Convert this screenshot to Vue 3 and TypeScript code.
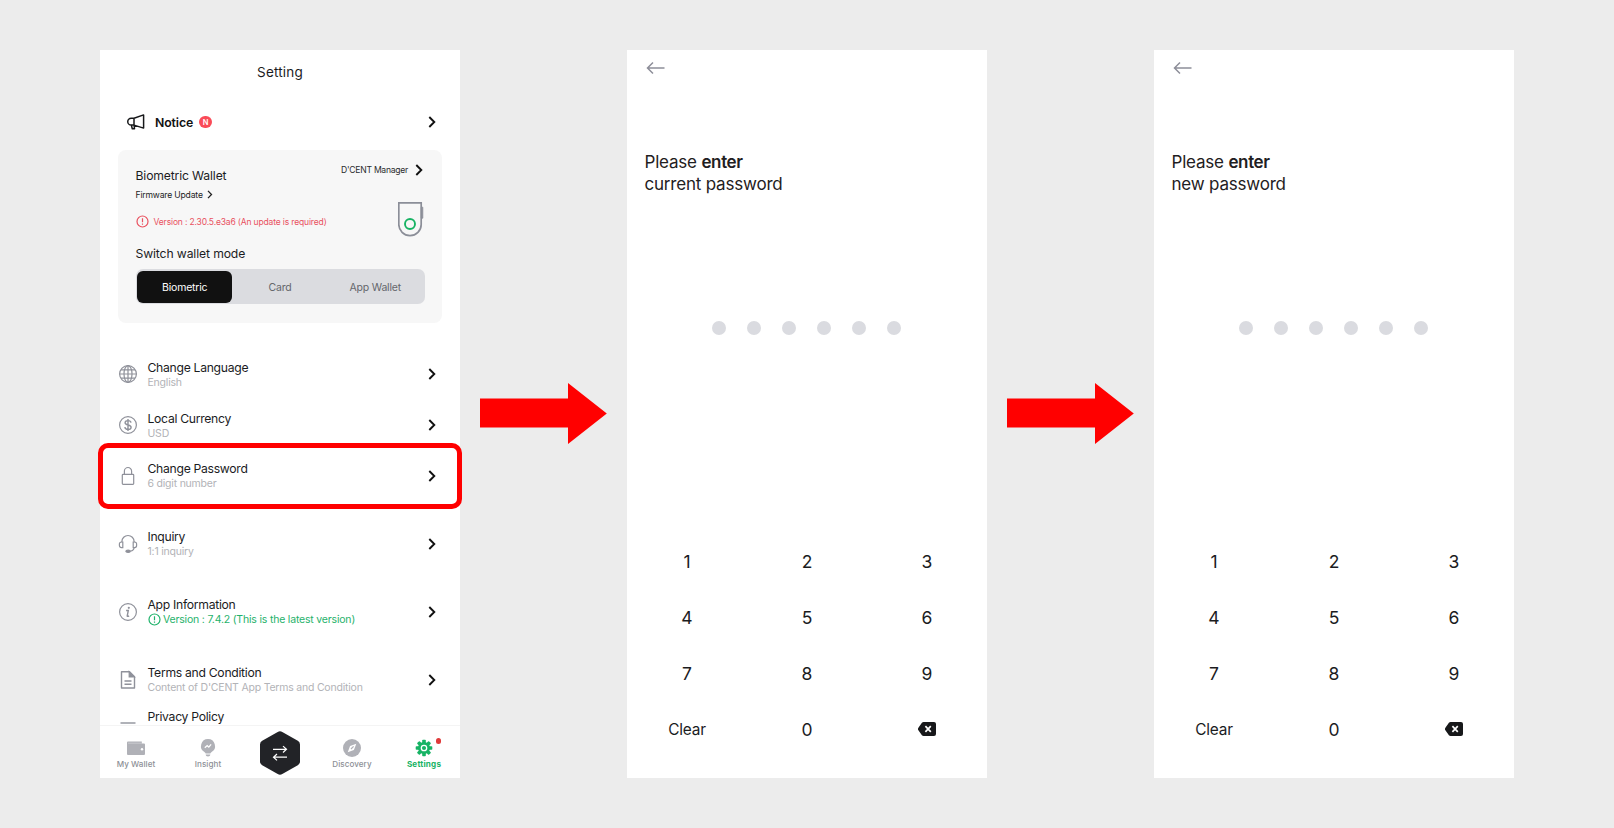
<script setup lang="ts">
interface Row {
  id: string
  icon: string
  title: string
  sub: string
  gap?: boolean
  ok?: boolean
  highlight?: boolean
}

const rows: Row[] = [
  { id: 'language', icon: 'globe', title: 'Change Language', sub: 'English' },
  { id: 'currency', icon: 'dollar', title: 'Local Currency', sub: 'USD' },
  { id: 'password', icon: 'lock', title: 'Change Password', sub: '6 digit number', highlight: true },
  { id: 'inquiry', icon: 'headset', title: 'Inquiry', sub: '1:1 inquiry', gap: true },
  { id: 'app', icon: 'info', title: 'App Information', sub: 'Version : 7.4.2 (This is the latest version)', gap: true, ok: true },
  { id: 'terms', icon: 'doc', title: 'Terms and Condition', sub: "Content of D'CENT App Terms and Condition", gap: true },
]

const screens: string[] = ['current password', 'new password']
const keys: string[] = ['1', '2', '3', '4', '5', '6', '7', '8', '9', 'Clear', '0', 'back']
</script>

<template>
  <main class="board">
    <section class="phone">
      <div class="scroll">
        <header class="heading">Setting</header>

        <div class="notice">
          <svg class="horn" viewBox="0 0 18 16">
            <path d="M7 4.2 16.6.9v13.2L7 11.1H4.2a3.4 3.4 0 0 1 0-6.9zM7 4.2v6.9M4.4 11.2l.9 3.6h2.2l-.4-3.6" />
          </svg>
          <b class="notice-label">Notice</b>
          <span class="badge">N</span>
          <svg class="chev" viewBox="0 0 8 12"><path d="m1.3 1 5 5-5 5" /></svg>
        </div>

        <div class="card">
          <div class="card-top">
            <div class="card-left">
              <div class="card-title">Biometric Wallet</div>
              <div class="firmware">
                <span>Firmware Update</span>
                <svg class="chev-s" viewBox="0 0 6 9"><path d="m1 .9 3.5 3.6L1 8.1" /></svg>
              </div>
              <div class="warn">
                <svg class="alert" viewBox="0 0 13 13"><circle cx="6.5" cy="6.5" r="5.5" /><path d="M6.5 3.3v3.9M6.5 8.5v1.2" /></svg>
                <span>Version : 2.30.5.e3a6 (An update is required)</span>
              </div>
            </div>
            <div class="card-right">
              <div class="manager">
                <span>D'CENT Manager</span>
                <svg class="chev" viewBox="0 0 8 12"><path d="m1.3 1 5 5-5 5" /></svg>
              </div>
              <svg class="device" viewBox="0 0 26 35">
                <path class="dev-btn" d="M23.2 5.2h1.6v11h-1.6z" />
                <path class="dev-body" d="M.8.8h22.4v21.6a11.2 11.2 0 0 1-22.4 0z" />
                <circle cx="12" cy="22" r="5" />
              </svg>
            </div>
          </div>
          <div class="mode-title">Switch wallet mode</div>
          <div class="seg">
            <span class="seg-item on">Biometric</span>
            <span class="seg-item">Card</span>
            <span class="seg-item">App Wallet</span>
          </div>
        </div>

        <div class="list">
          <div v-for="r in rows" :key="r.id" class="row" :class="{ gap: r.gap }">
            <svg class="ico" viewBox="0 0 20 20">
              <g v-if="r.icon === 'globe'">
                <circle cx="10" cy="10" r="8.4" /><ellipse cx="10" cy="10" rx="4" ry="8.4" />
                <path d="M10 1.6v16.8M1.6 10h16.8M2.9 5.9h14.2M2.9 14.1h14.2" />
              </g>
              <g v-else-if="r.icon === 'dollar'">
                <circle cx="10" cy="10" r="8.4" />
                <path class="mid" d="M13 7.6c-.2-1.3-1.3-2-3-2s-2.9.8-2.9 2.1c0 3 6 1.5 6 4.5 0 1.4-1.3 2.2-3.1 2.2s-3-.8-3.2-2.2M10 4v12" />
              </g>
              <g v-else-if="r.icon === 'lock'">
                <rect x="4.3" y="8.3" width="11.4" height="10" rx=".8" />
                <path d="M6.4 8.2V5.1a3.6 3.6 0 0 1 7.2 0v3.1" />
              </g>
              <g v-else-if="r.icon === 'headset'">
                <path d="M3.9 8.2V7.6a6.1 6.1 0 0 1 12.2 0v.6M16.1 13.2c0 2-1.500 3.600-3.800 3.900" />
                <path d="M4.800 8v5.600H3.400a2 2 0 0 1-2-2v-1.400A2 2 0 0 1 3.400 8zM15.200 8v5.600h1.400a2 2 0 0 0 2-2v-1.400a2 2 0 0 0-2-2.200z" />
                <ellipse class="fill" cx="10.100" cy="17.200" rx="2.200" ry="1.200" />
              </g>
              <g v-else-if="r.icon === 'info'">
                <circle cx="10" cy="10" r="8.4" />
                <path class="mid" d="M8.100 8.500h2.200L9.200 14c.4.5 1 .3 1.900-.2" /><circle class="dot" cx="10.800" cy="5.800" r="1.100" />
              </g>
              <g v-else>
                <path class="mid" d="M3.500 1.700h8l5 5v11.300h-13z" stroke-linejoin="round" />
                <path class="fill" d="M11.200 1.700v5.200h5.200z" /><path class="mid" d="M6.500 11h7M6.500 14.300h7" />
              </g>
            </svg>
            <div class="texts">
              <div class="t">{{ r.title }}</div>
              <div class="s" :class="[r.id, { ok: r.ok }]">
                <svg v-if="r.ok" class="alert" viewBox="0 0 13 13"><circle cx="6.5" cy="6.5" r="5.5" /><path d="M6.5 3.3v3.9M6.5 8.5v1.2" /></svg>
                <span>{{ r.sub }}</span>
              </div>
            </div>
            <svg class="chev" viewBox="0 0 8 12"><path d="m1.3 1 5 5-5 5" /></svg>
            <div v-if="r.highlight" class="frame"></div>
          </div>
          <div class="row cut">
            <svg class="ico" viewBox="0 0 20 20"><path class="mid" d="M2.5 2h15" /></svg>
            <div class="texts"><div class="t">Privacy Policy</div></div>
          </div>
        </div>
      </div>

      <nav class="tabs">
        <div class="tab">
          <svg class="tab-ico" viewBox="0 0 20 20">
            <path d="M2.3 3.500h13.500v2H18a1 1 0 0 1 1 1v9.500a1 1 0 0 1-1 1H2a1 1 0 0 1-1-1V4.800c0-.8.5-1.300 1.300-1.300z" />
            <path class="light" d="M2 5.200h13.800" /><circle class="white" cx="16" cy="11.200" r="1.200" />
          </svg>
          <span>My Wallet</span>
        </div>
        <div class="tab">
          <svg class="tab-ico" viewBox="0 0 20 20">
            <path d="M10 1a7 7 0 0 1 3.600 13c-.8.5-1 1.200-1.300 1.600H7.700c-.3-.4-.5-1.100-1.300-1.600A7 7 0 0 1 10 1zM7.700 16.600h4.600c0 1.200-.9 1.900-2.300 1.900s-2.300-.7-2.300-1.900z" />
            <path class="cutline" d="m6.800 9.800 2.400-2.200 1.600 1.500 2.300-2.700" />
          </svg>
          <span>Insight</span>
        </div>
        <div class="tab center">
          <svg class="hex" viewBox="0 0 40 44">
            <path d="M17.700.9a4.500 4.500 0 0 1 4.600 0l15.500 8.900a4.400 4.400 0 0 1 2.200 3.800v16.800a4.400 4.400 0 0 1-2.200 3.800l-15.500 8.900a4.500 4.500 0 0 1-4.600 0L2.200 34.200A4.400 4.400 0 0 1 0 30.400V13.600a4.400 4.400 0 0 1 2.200-3.800z" />
            <path class="swap" d="M13 18.300h13.500M23 15.100l3.500 3.200-3.500 3.200M27 26.200H13.500M17 23l-3.500 3.200 3.500 3.200" />
          </svg>
        </div>
        <div class="tab">
          <svg class="tab-ico" viewBox="0 0 20 20">
            <circle cx="10" cy="10" r="9" /><path class="white" d="m14.300 5.700-2.400 6.200-6.200 2.400 2.400-6.200z" /><path class="needle" d="m9 11 2.600-2.600" />
          </svg>
          <span>Discovery</span>
        </div>
        <div class="tab active">
          <svg class="tab-ico" viewBox="0 0 20 20">
            <g v-for="a in [0, 45, 90, 135]" :key="a" :transform="`rotate(${a} 10 10)`"><rect x="8.200" y="1.700" width="3.600" height="16.600" rx=".8" /></g>
            <circle cx="10" cy="10" r="6" /><circle class="ring" cx="10" cy="10" r="2.700" />
          </svg>
          <span>Settings</span>
          <i class="ping"></i>
        </div>
      </nav>
    </section>

    <template v-for="s in screens" :key="s">
      <svg class="flow" viewBox="0 0 127 61"><path d="M0 15.500h88V0l38.800 30.500L88 61V44.500H0z" /></svg>
      <section class="phone pin">
        <svg class="backarrow" viewBox="0 0 20 14"><path d="M18.500 7H1.800M7 1.500 1.500 7 7 12.500" /></svg>
        <div class="prompt">
          <div>Please <b>enter</b></div>
          <div>{{ s }}</div>
        </div>
        <div class="dots"><i v-for="n in 6" :key="n"></i></div>
        <div class="pad">
          <div v-for="k in keys" :key="k" class="key" :class="{ clear: k === 'Clear' }">
            <svg v-if="k === 'back'" class="bksp" viewBox="0 0 18 14">
              <path d="M5.600 0H16a2 2 0 0 1 2 2v10a2 2 0 0 1-2 2H5.600c-.7 0-1.300-.3-1.700-.8L.4 8.200a2 2 0 0 1 0-2.400L3.900.8C4.300.3 4.900 0 5.600 0z" />
              <path class="x" d="m7.400 4.200 5.400 5.600M12.800 4.200 7.400 9.800" />
            </svg>
            <span v-else>{{ k }}</span>
          </div>
        </div>
      </section>
    </template>
  </main>
</template>

<style>
body { margin: 0; background: #ececec; }
</style>

<style scoped>
.board {
  box-sizing: border-box;
  width: 1614px;
  height: 828px;
  padding: 50px 100px;
  display: flex;
  align-items: flex-start;
  background: #ececec;
  font-family: Inter, "Liberation Sans", sans-serif;
  color: #1b1c1e;
  overflow: hidden;
}
svg { display: block; flex: none; fill: none; }
.phone { width: 360px; height: 728px; background: #fff; flex: none; display: flex; flex-direction: column; }
.scroll { height: 675px; display: flow-root; }
.heading { height: 44px; line-height: 44px; text-align: center; font-size: 13.5px; letter-spacing: .2px; }
.notice { height: 56.4px; display: flex; align-items: center; padding: 0 24px 0 27px; }
.horn { width: 18px; height: 16px; stroke: #17181a; stroke-width: 1.5; stroke-linejoin: round; }
.notice-label { margin-left: 10px; font-size: 12.3px; font-weight: 600; letter-spacing: -.1px; color: #111; }
.badge { flex: none; width: 12.6px; height: 12.6px; border-radius: 50%; background: #fa4b58; color: #fff; font-size: 7.5px; font-weight: 600; line-height: 13.4px; text-align: center; margin-left: 6px; }
.chev { width: 8px; height: 12px; stroke: #111; stroke-width: 1.9; margin-left: auto; }
.card { box-sizing: border-box; width: 324px; height: 172.6px; margin-left: 18px; border-radius: 8px; background: #f7f7f7; padding: 0 18px 0 17.5px; }
.card-top { display: flex; justify-content: space-between; height: 93.6px; }
.card-title { margin-top: 16.6px; height: 18px; line-height: 18px; font-size: 12.2px; letter-spacing: -.15px; }
.firmware { display: flex; align-items: center; gap: 4.5px; height: 20px; font-size: 8.6px; letter-spacing: -.18px; }
.chev-s { width: 6px; height: 9px; stroke: #222; stroke-width: 1.3; }
.warn { display: flex; align-items: center; gap: 5px; margin-top: 9px; height: 16px; color: #e9515f; font-size: 8.5px; letter-spacing: -.15px; white-space: nowrap; }
.alert { width: 13px; height: 13px; stroke: currentColor; stroke-width: 1.2; }
.card-right { display: flex; flex-direction: column; align-items: flex-end; }
.manager { display: flex; align-items: center; gap: 7px; height: 12px; margin: 13.4px 1px 0 0; font-size: 8.6px; letter-spacing: -.27px; white-space: nowrap; color: #2a2b2d; }
.device { width: 26px; height: 35px; margin-top: 26px; margin-right: .5px; }
.dev-body { stroke: #8b8e98; stroke-width: 1.7; }
.dev-btn { stroke: #8b8e98; fill: #8b8e98; stroke-width: .8; }
.device circle { stroke: #17b364; stroke-width: 1.9; }
.mode-title { height: 20px; line-height: 20px; font-size: 12.2px; letter-spacing: -.13px; }
.seg { box-sizing: border-box; width: 289px; height: 35px; margin-top: 5.5px; padding: 1.6px; border-radius: 7px; background: #dbdce0; display: flex; }
.seg-item { flex: 1; text-align: center; line-height: 33.6px; font-size: 10.5px; letter-spacing: -.2px; color: #65676c; }
.seg-item.on { background: #111; color: #fff; border-radius: 6px; }
.list { padding-top: 26.2px; }
.row { position: relative; height: 50.6px; display: flex; align-items: center; padding: 0 24px 0 18px; }
.row.gap { margin-top: 17.4px; }
.ico { width: 20px; height: 20px; stroke: #8f919a; stroke-width: 1.2; }
.ico .mid { stroke-width: 1.4; }
.ico .fill, .ico .dot { fill: #8f919a; }
.ico .dot { stroke: none; }
.texts { margin: 1px 0 0 9.5px; }
.t { height: 15px; line-height: 15px; font-size: 12.2px; letter-spacing: -.3px; white-space: nowrap; }
.s { height: 15px; line-height: 15px; font-size: 10.5px; letter-spacing: -.21px; color: #b2b3b7; white-space: nowrap; display: flex; align-items: center; }
.s.ok { color: #1fb26b; gap: 2.5px; letter-spacing: -.19px; }
.frame { position: absolute; left: -2.4px; top: -6.9px; width: 354px; height: 56px; border: 5px solid #f00; border-radius: 10px; }
.cut { align-items: flex-start; }
.cut .texts { margin-top: 4.4px; }
.cut .ico { margin-top: 16.5px; }
.tabs { position: relative; box-sizing: border-box; height: 53px; border-top: 1px solid #f4f4f4; background: #fff; display: flex; }
.tab { position: relative; width: 72px; display: flex; flex-direction: column; align-items: center; font-size: 8.1px; font-weight: 500; color: #8d8f96; }
.tab span { line-height: 12px; margin-top: 0; letter-spacing: .05px; }
.tab-ico { width: 20px; height: 20px; margin-top: 11.6px; fill: #b0b1b7; }
.tab-ico .white { fill: #fff; }
.tab-ico .light { stroke: #d0d1d5; stroke-width: .8; }
.tab-ico .cutline { stroke: #fff; stroke-width: 1.3; fill: none; }
.tab-ico .needle { stroke: #b0b1b7; stroke-width: 1.2; }
.hex { width: 40px; height: 44px; margin-top: 5px; fill: #222327; }
.hex .swap { stroke: #fff; stroke-width: 1.2; fill: none; }
.tab.active { color: #16b364; font-weight: 700; }
.tab.active span { letter-spacing: .2px; }
.active .tab-ico { fill: #16b364; }
.active .ring { stroke: #fff; stroke-width: 1.3; }
.ping { position: absolute; left: 47.5px; top: 12px; width: 5.6px; height: 5.6px; border-radius: 50%; background: #e03a3a; }
.flow { width: 127px; height: 61px; margin: 333.4px 20px 0; fill: #f00; }
.backarrow { width: 20px; height: 14px; margin: 11.4px 0 0 18.5px; stroke: #8d8e99; stroke-width: 1.5; }
.prompt { margin: 75.6px 0 0 17.5px; font-size: 17px; letter-spacing: -.2px; line-height: 22px; height: 44px; color: #1f2022; }
.prompt b { font-weight: 600; letter-spacing: -.35px; }
.dots { display: flex; justify-content: center; gap: 21px; margin: 126.4px .6px 0 0; }
.dots i { width: 14px; height: 14px; border-radius: 50%; background: #dadbe0; }
.pad { display: grid; grid-template-columns: repeat(3, 120px); grid-auto-rows: 56px; margin-top: 197.8px; }
.key { display: flex; align-items: center; justify-content: center; font-size: 17.5px; font-weight: 370; }
.key.clear { font-size: 15.4px; letter-spacing: -.2px; }
.bksp { width: 18px; height: 14px; fill: #17181a; }
.bksp .x { stroke: #fff; stroke-width: 1.7; }
</style>
